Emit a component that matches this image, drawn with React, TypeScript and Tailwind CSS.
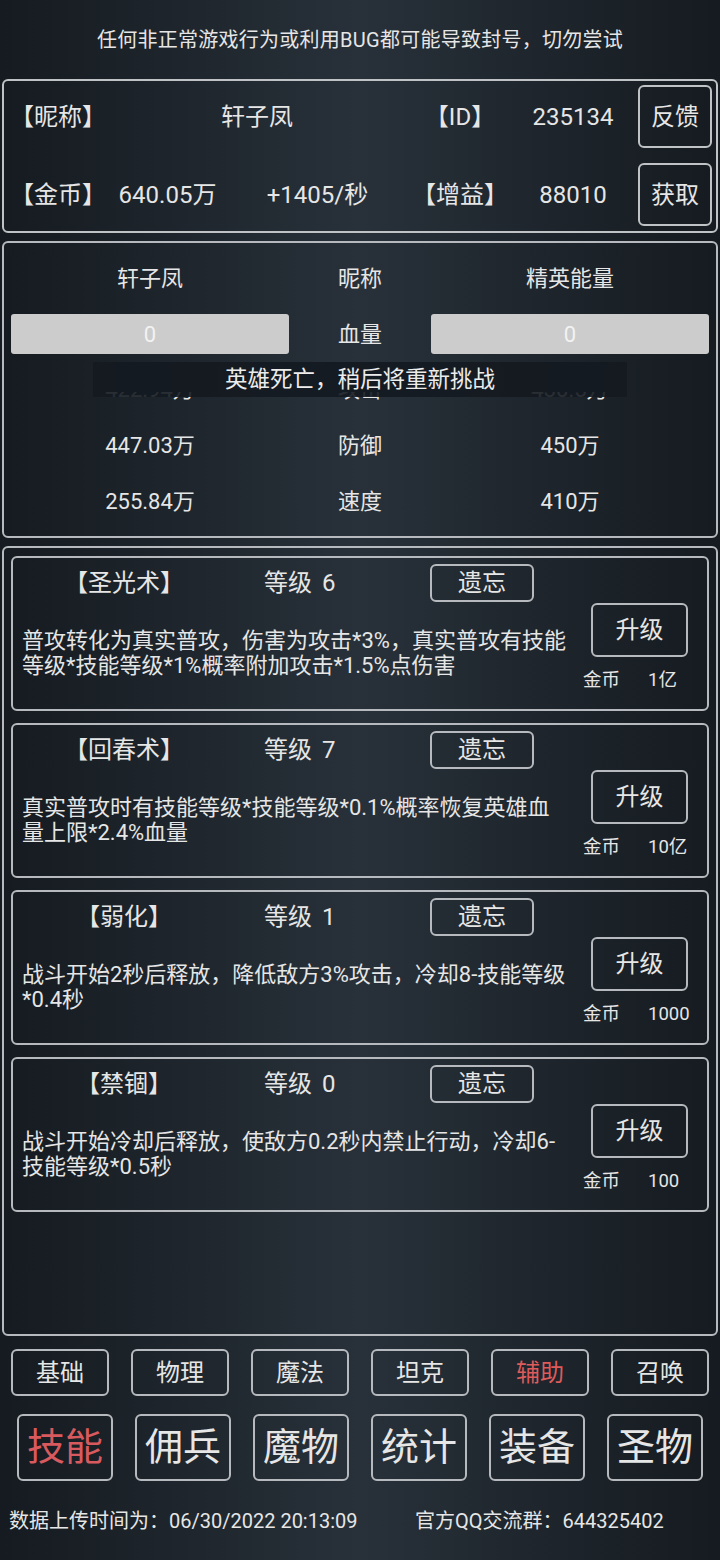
import React from "react";

const skills = [
  {
    name: "【圣光术】",
    level: 6,
    lines: ["普攻转化为真实普攻，伤害为攻击*3%，真实普攻有技能", "等级*技能等级*1%概率附加攻击*1.5%点伤害"],
    cost: "1亿",
  },
  {
    name: "【回春术】",
    level: 7,
    lines: ["真实普攻时有技能等级*技能等级*0.1%概率恢复英雄血", "量上限*2.4%血量"],
    cost: "10亿",
  },
  {
    name: "【弱化】",
    level: 1,
    lines: ["战斗开始2秒后释放，降低敌方3%攻击，冷却8-技能等级", "*0.4秒"],
    cost: "1000",
  },
  {
    name: "【禁锢】",
    level: 0,
    lines: ["战斗开始冷却后释放，使敌方0.2秒内禁止行动，冷却6-", "技能等级*0.5秒"],
    cost: "100",
  },
];

const statRows = [
  ["422.94万", "攻击", "430.5万"],
  ["447.03万", "防御", "450万"],
  ["255.84万", "速度", "410万"],
];

const tabs1 = ["基础", "物理", "魔法", "坦克", "辅助", "召唤"];
const tabs2 = ["技能", "佣兵", "魔物", "统计", "装备", "圣物"];

function SkillCard({ s }: { s: (typeof skills)[number] }) {
  return (
    <div className="h-[155px] shrink-0 border-2 border-[#b6babe] rounded-[6px] flex flex-col">
      <div className="pt-[6px] flex items-center h-[44px]">
        <div className="w-[222px] text-center text-[24px] leading-[38px]">{s.name}</div>
        <div className="ml-[29px] w-[166px] text-[24px] leading-[38px]">
          等级<span className="ml-[10px]">{s.level}</span>
        </div>
        <div className="w-[104px] h-[38px] border-2 border-[#b6babe] rounded-[6px] flex items-center justify-center text-[24px]">
          遗忘
        </div>
      </div>
      <div className="mt-[1px] flex">
        <div className="flex-1 pl-[9px] pt-[25px] text-[22px] leading-[25px] whitespace-nowrap">
          {s.lines.map((l, i) => (
            <div key={i}>{l}</div>
          ))}
        </div>
        <div className="w-[124px] flex flex-col">
          <div className="ml-[8px] w-[97px] h-[54px] border-2 border-[#b6babe] rounded-[6px] flex items-center justify-center text-[24px]">
            升级
          </div>
          <div className="mt-[12px] h-[24px] flex items-center text-[18.5px]">
            <span className="w-[65px]">金币</span>
            <span>{s.cost}</span>
          </div>
        </div>
      </div>
    </div>
  );
}

export default function App() {
  return (
    <div
      className="w-[720px] h-[1560px] overflow-hidden flex flex-col text-[#e6e6e6] bg-[linear-gradient(to_right,#151b20_0%,#1e252c_25%,#28313a_50%,#1e252c_75%,#151b20_100%)]"
      style={{ fontFamily: "Roboto, 'Noto Sans CJK SC', sans-serif" }}
    >
      <div className="h-[79px] shrink-0 flex items-center justify-center text-[20px] tracking-[0.25px]">
        任何非正常游戏行为或利用BUG都可能导致封号，切勿尝试
      </div>

      {/* Panel 1 */}
      <div className="mx-[2px] h-[154px] shrink-0 border-2 border-[#bfc3c6] rounded-[6px] pt-[4px] pb-[5px] pr-[4px] flex flex-col gap-[15px] text-[24px]">
        <div className="h-[63px] flex items-center">
          <div className="w-[100px] pl-[6px] whitespace-nowrap">【昵称】</div>
          <div className="w-[306px] text-center">轩子凤</div>
          <div className="w-[100px] text-center whitespace-nowrap">【ID】</div>
          <div className="w-[126px] text-center">235134</div>
          <div className="ml-[2px] w-[74px] h-[63px] border-2 border-[#bfc3c6] rounded-[6px] flex items-center justify-center">
            反馈
          </div>
        </div>
        <div className="h-[63px] flex items-center">
          <div className="w-[106px] pl-[6px] whitespace-nowrap">【金币】</div>
          <div className="w-[115px] text-center">640.05万</div>
          <div className="w-[185px] text-center">+1405/秒</div>
          <div className="w-[100px] text-center whitespace-nowrap">【增益】</div>
          <div className="w-[126px] text-center">88010</div>
          <div className="ml-[2px] w-[74px] h-[63px] border-2 border-[#bfc3c6] rounded-[6px] flex items-center justify-center">
            获取
          </div>
        </div>
      </div>

      {/* Panel 2 */}
      <div className="relative mt-[8px] mx-[2px] h-[297px] shrink-0 border-2 border-[#b6babe] rounded-[6px] flex flex-col text-[22px]">
        <div className="mt-[15px] h-[40px] grid grid-cols-[292px_128px_292px] items-center text-center">
          <div>轩子凤</div>
          <div>昵称</div>
          <div>精英能量</div>
        </div>
        <div className="mt-[16px] h-[40px] grid grid-cols-[292px_128px_292px] items-center text-center">
          <div className="mx-[7px] h-[40px] rounded-[3px] bg-[#cccccc] text-[#f2f2f2] flex items-center justify-center">0</div>
          <div>血量</div>
          <div className="mx-[7px] h-[40px] rounded-[3px] bg-[#cccccc] text-[#f2f2f2] flex items-center justify-center">0</div>
        </div>
        <div className="mt-[38px] h-[144px] overflow-hidden">
          <div className="-mt-[31px]">
            {statRows.map((r, i) => (
              <div key={i} className="h-[56px] grid grid-cols-[292px_128px_292px] items-center text-center">
                <div>{r[0]}</div>
                <div>{r[1]}</div>
                <div>{r[2]}</div>
              </div>
            ))}
          </div>
        </div>
        <div className="absolute left-[89px] top-[119px] w-[534px] h-[35px] bg-[#141a20]/90 flex items-center justify-center text-[22.5px] text-[#ececec]">
          英雄死亡，稍后将重新挑战
        </div>
      </div>

      {/* Panel 3 */}
      <div className="mt-[8px] mx-[2px] h-[790px] shrink-0 border-2 border-[#b6babe] rounded-[6px] px-[7px] pt-[8px] flex flex-col gap-[12px]">
        {skills.map((s, i) => (
          <SkillCard key={i} s={s} />
        ))}
      </div>

      {/* Tabs row 1 */}
      <div className="mt-[13px] px-[11px] flex gap-[22px] shrink-0">
        {tabs1.map((t) => (
          <div
            key={t}
            className={`w-[98px] h-[47px] border-2 border-[#b6babe] rounded-[6px] flex items-center justify-center text-[24px] ${
              t === "辅助" ? "text-[#de5b5b]" : ""
            }`}
          >
            {t}
          </div>
        ))}
      </div>

      {/* Tabs row 2 */}
      <div className="mt-[18px] px-[17px] flex gap-[22px] shrink-0">
        {tabs2.map((t) => (
          <div
            key={t}
            className={`w-[96px] h-[67px] border-2 border-[#b6babe] rounded-[6px] flex items-center justify-center text-[38px] ${
              t === "技能" ? "text-[#d95a5e]" : ""
            }`}
          >
            {t}
          </div>
        ))}
      </div>

      {/* Footer */}
      <div className="mt-[20px] h-[40px] flex items-center text-[20px] whitespace-nowrap shrink-0">
        <div className="w-[415px] pl-[9px]">数据上传时间为：06/30/2022 20:13:09</div>
        <div>官方QQ交流群：644325402</div>
      </div>
    </div>
  );
}
